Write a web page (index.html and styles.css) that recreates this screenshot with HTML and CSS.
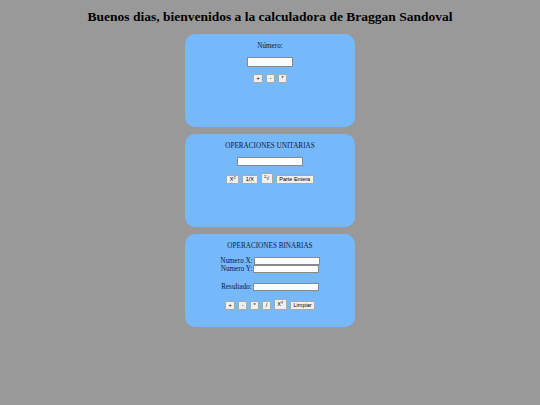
FILE: index.html
```html
<!DOCTYPE html>
<html>
<head>
<meta charset="utf-8">
<link rel="stylesheet" href="styles.css">
</head>
<body>
<h1 class="title">Buenos dias, bienvenidos a la calculadora de Braggan Sandoval</h1>
<main class="stack">
  <section class="card">
    <p class="label">Número:</p>
    <input class="field field-sm" type="text">
    <div class="btns">
      <button class="btn">+</button>
      <button class="btn">-</button>
      <button class="btn">*</button>
    </div>
  </section>
  <section class="card">
    <p class="label">OPERACIONES UNITARIAS</p>
    <input class="field" type="text">
    <div class="btns">
      <button class="btn">X<sup>2</sup></button>
      <button class="btn">1/X</button>
      <button class="btn btn-tall"><sup>2</sup>√</button>
      <button class="btn">Parte Entera</button>
    </div>
  </section>
  <section class="card">
    <p class="label">OPERACIONES BINARIAS</p>
    <div class="row"><span class="lbl">Numero X:</span><input class="field" type="text"></div>
    <div class="row"><span class="lbl">Numero Y:</span><input class="field" type="text"></div>
    <div class="row row-res"><span class="lbl">Resultado:</span><input class="field" type="text"></div>
    <div class="btns btns-bin">
      <button class="btn">+</button>
      <button class="btn">-</button>
      <button class="btn">*</button>
      <button class="btn">/</button>
      <button class="btn btn-tall">X<sup>Y</sup></button>
      <button class="btn">Limpiar</button>
    </div>
  </section>
</main>
</body>
</html>
```

FILE: styles.css
```css
html, body {
  margin: 0;
  padding: 0;
  background: #999999;
  font-family: "Liberation Serif", serif;
  color: #0e1a38;
}
.title {
  margin: 0;
  padding-top: 9px;
  height: 25px;
  font-size: 13.5px;
  line-height: 16px;
  font-weight: bold;
  text-align: center;
  color: #000;
}
.stack {
  display: flex;
  flex-direction: column;
  align-items: center;
  gap: 7px;
}
.card {
  box-sizing: border-box;
  width: 170px;
  height: 93px;
  background: #75b8fc;
  border-radius: 10px;
  padding-top: 7px;
  display: flex;
  flex-direction: column;
  align-items: center;
}
.label {
  margin: 0 0 6px;
  font-size: 7.2px;
  line-height: 10px;
}
.field {
  box-sizing: border-box;
  width: 66px;
  height: 9px;
  border: 1px solid #8a8a8a;
  background: #fff;
  padding: 0;
  margin: 0;
}
.field-sm {
  width: 46px;
  height: 10px;
}
.btns {
  display: flex;
  align-items: flex-end;
  gap: 3px;
  margin-top: 7px;
}
.btns-bin {
  margin-top: 8px;
}
.btn {
  box-sizing: border-box;
  height: 9px;
  min-width: 8px;
  padding: 0 2.5px;
  font-family: "Liberation Sans", sans-serif;
  font-size: 5.5px;
  line-height: 7px;
  border: 1px solid #a8a8a8;
  border-radius: 1px;
  background: #efefef;
  color: #000;
}
.btn-tall {
  height: 11px;
}
.btn sup {
  font-size: 4px;
  line-height: 0;
  vertical-align: 2px;
}
.row {
  display: flex;
  align-items: center;
  font-size: 7.2px;
  line-height: 8px;
}
.row .field {
  height: 8px;
}
.row-res {
  margin-top: 10px;
}
.lbl {
  margin-right: 1px;
}
```
